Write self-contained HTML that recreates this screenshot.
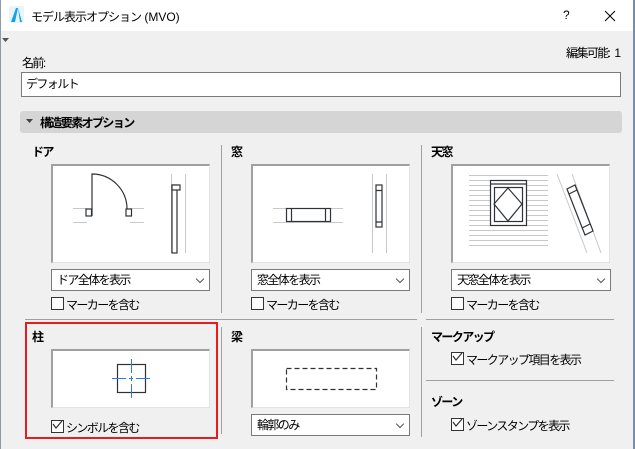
<!DOCTYPE html>
<html><head><meta charset="utf-8"><style>
*{margin:0;padding:0;box-sizing:border-box}
body{width:635px;height:449px;background:#f0f0f0;font-family:"Liberation Sans","Noto Sans CJK JP",sans-serif;font-size:12px;color:#000;position:relative;overflow:hidden;letter-spacing:-1.6px}
.a{position:absolute;white-space:nowrap}
.box{position:absolute;background:#fff;border-top:2px solid #a0a0a0;border-left:2px solid #a0a0a0;border-right:1px solid #e3e3e3;border-bottom:1px solid #e3e3e3}
.dd{position:absolute;background:#fff;border:1px solid #7a7a7a;height:22px;padding-left:5px;line-height:20px}
.dd:after{content:"";position:absolute;right:6px;top:6px;width:5px;height:5px;border-right:1px solid #555;border-bottom:1px solid #555;transform:rotate(45deg)}
.cb{position:absolute;width:13px;height:13px;border:1px solid #333;background:#fff}
.vl{position:absolute;width:1px;background:#a0a0a0}
.hl{position:absolute;height:1px;background:#a0a0a0}
b{font-weight:bold}
</style></head><body>
<div class="a" style="left:0;top:0;width:635px;height:31px;background:#fff"></div>
<div class="a" style="left:0;top:0;width:1px;height:449px;background:#8a9bb0"></div>
<div class="a" style="left:633px;top:0;width:2px;height:449px;background:#7a8ca8"></div>
<svg class="a" style="left:9px;top:6px" width="16" height="18"><rect x="0" y="0" width="15" height="17" rx="2" fill="#e8f4fb"/><path d="M2 16 L7 2 L9 2 L6 16Z" fill="#1aa0e0"/><path d="M9 2 L13 16 L11 16 Z" fill="#1aa0e0"/></svg>
<div class="a" style="left:31px;top:8px;letter-spacing:-1px">モデル表示オプション<span style="letter-spacing:0"> (MVO)</span></div>
<div class="a" style="left:563px;top:8px">?</div>
<svg class="a" style="left:604px;top:10px" width="12" height="12"><path d="M1 1L11 11M11 1L1 11" stroke="#000" stroke-width="1"/></svg>
<svg class="a" style="left:2px;top:38px" width="8" height="5"><path d="M0 0H7L3.5 4Z" fill="#555"/></svg>
<div class="a" style="right:14px;top:44px">編集可能<span style="letter-spacing:0">: 1</span></div>
<div class="a" style="left:22px;top:54px">名前<span style="letter-spacing:0">:</span></div>
<div class="a" style="left:21px;top:72px;width:600px;height:25px;background:#fff;border:1px solid #7a7a7a;padding-left:4px;line-height:23px">デフォルト</div>
<div class="a" style="left:20px;top:111px;width:602px;height:22px;background:#d5d5d5;border-radius:3px"></div>
<svg class="a" style="left:26px;top:119px" width="8" height="5"><path d="M0 0H7L3.5 4Z" fill="#444"/></svg>
<div class="a" style="left:40px;top:114px"><b>構造要素オプション</b></div>

<div class="a" style="left:32px;top:143px"><b>ドア</b></div>
<div class="a" style="left:231px;top:143px"><b>窓</b></div>
<div class="a" style="left:431px;top:143px"><b>天窓</b></div>
<div class="vl" style="left:221px;top:145px;height:168px"></div>
<div class="vl" style="left:421px;top:145px;height:168px"></div>

<div class="box" style="left:51px;top:164px;width:159px;height:99px"></div>
<div class="box" style="left:251px;top:164px;width:159px;height:99px"></div>
<div class="box" style="left:451px;top:164px;width:159px;height:99px"></div>
<div class="dd" style="left:51px;top:269px;width:159px">ドア全体を表示</div>
<div class="dd" style="left:251px;top:269px;width:159px">窓全体を表示</div>
<div class="dd" style="left:451px;top:269px;width:160px">天窓全体を表示</div>
<div class="cb" style="left:51px;top:297px"></div><div class="a" style="left:66px;top:296px">マーカーを含む</div>
<div class="cb" style="left:251px;top:297px"></div><div class="a" style="left:266px;top:296px">マーカーを含む</div>
<div class="cb" style="left:451px;top:297px"></div><div class="a" style="left:466px;top:296px">マーカーを含む</div>

<div class="hl" style="left:25px;top:319px;width:392px"></div>
<div class="hl" style="left:426px;top:319px;width:188px"></div>

<div class="a" style="left:25px;top:322px;width:193px;height:117px;border:2px solid #e81c1c"></div>
<div class="a" style="left:32px;top:328px"><b>柱</b></div>
<div class="box" style="left:51px;top:349px;width:159px;height:59px"></div>
<div class="cb" style="left:51px;top:420px"></div><div class="a" style="left:66px;top:419px">シンボルを含む</div>
<div class="vl" style="left:221px;top:327px;height:107px"></div>
<div class="a" style="left:231px;top:328px"><b>梁</b></div>
<div class="box" style="left:251px;top:349px;width:159px;height:59px"></div>
<div class="dd" style="left:251px;top:414px;width:159px">輪郭のみ</div>
<div class="vl" style="left:421px;top:327px;height:110px"></div>
<div class="a" style="left:431px;top:328px"><b>マークアップ</b></div>
<div class="cb" style="left:451px;top:352px"></div><div class="a" style="left:466px;top:351px">マークアップ項目を表示</div>
<div class="hl" style="left:426px;top:380px;width:188px"></div>
<div class="a" style="left:431px;top:393px"><b>ゾーン</b></div>
<div class="cb" style="left:451px;top:418px"></div><div class="a" style="left:466px;top:417px">ゾーンスタンプを表示</div>

<svg class="a" style="left:0;top:0" width="635" height="449" fill="none">
<g stroke="#333" stroke-width="1.2"><path d="M53 424l3 4 6-7M453 356l3 4 6-7M453 422l3 4 6-7"/></g>
<g stroke="#c8c8c8"><path d="M73 208.5H87M73 222.5H87M130 208.5H144M130 222.5H144M171.5 174V253M185.5 174V253"/>
<path d="M273 208.5H343M273 222.5H343M372.5 174V253M386.5 174V253"/>
<path d="M469 175.5H548M469 180.5H548M469 185.5H548M469 190.5H548M469 195.5H548M469 200.5H548M469 205.5H548M469 210.5H548M469 215.5H548M469 220.5H548M469 225.5H548M469 230.5H548M469 235.5H548M469 240.5H548M469 245.5H548"/>
<path d="M557 174L587 253M572 174L601 253"/></g>
<g stroke="#2e3338" stroke-width="1.2">
<path d="M92 216V174A35 35 0 0 1 127 209"/>
<rect x="86" y="209" width="5.5" height="7" fill="#fff"/><rect x="126" y="209" width="5.5" height="7" fill="#fff"/>
<rect x="172" y="185" width="5" height="68" fill="#fff"/><rect x="172" y="185" width="8" height="5" fill="#fff"/>
<rect x="286.5" y="208.5" width="44" height="13" fill="#fff"/><path d="M291.5 208.5V221.5M325.5 208.5V221.5"/>
<rect x="376" y="185" width="6" height="42" fill="#fff"/><path d="M376 190.5H382M376 222H382"/>
<rect x="490.5" y="180.5" width="36" height="45" fill="#fff"/><path d="M490.5 184H526.5"/>
<rect x="494.5" y="187.5" width="28" height="34"/><path d="M508 188L522 204L508 221L494 204Z"/>
<path d="M567 189L575 185L593 231L585 235Z" fill="#fff"/><path d="M569 194L577 190M582 228L590 224"/>
<rect x="117.5" y="364.5" width="28" height="28"/>
<rect x="286.5" y="368.5" width="90" height="21" stroke-dasharray="5 3"/></g>
<g stroke="#2e7be0" stroke-width="1"><path d="M112 378.5H126M129 378.5H133M136 378.5H150M131.5 359V373M131.5 376V381M131.5 384V398"/></g>
</svg>
</body></html>
